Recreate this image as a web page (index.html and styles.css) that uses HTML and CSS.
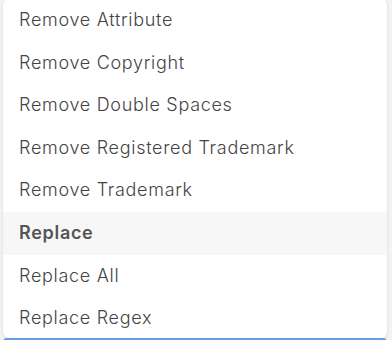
FILE: index.html
```html
<!DOCTYPE html>
<html>
<head>
<meta name="viewport" content="width=device-width, initial-scale=1">
<link rel="stylesheet" href="styles.css">
</head>
<body>

<div class="page">
  <ul class="menu">
    <li class="item">Remove Attribute</li>
    <li class="item">Remove Copyright</li>
    <li class="item">Remove Double Spaces</li>
    <li class="item">Remove Registered Trademark</li>
    <li class="item">Remove Trademark</li>
    <li class="item active">Replace</li>
    <li class="item">Replace All</li>
    <li class="item">Replace Regex</li>
  </ul>
  <div class="field"></div>
</div>

</body>
</html>
```

FILE: styles.css
```css
body {
  margin: 0;
  background-color: #f3f3f4;
  font-family: Inter, "Open Sans", Arial, sans-serif;
}

.page {
  padding: 0 5px 0 3px;
  height: 340px;
  overflow: hidden;
}

.menu {
  list-style: none;
  margin: -1px 0 0 0;
  padding: 0;
  height: 339px;
  background-color: #fff;
  border-radius: 6px;
  box-shadow: 0 1px 3px rgba(0, 0, 0, 0.12);
  overflow: hidden;
}

.item {
  height: 42.6px;
  line-height: 42.6px;
  padding-left: 16px;
  font-size: 18px;
  font-weight: 300;
  letter-spacing: 0.7px;
  color: #444;
}

.item.active {
  background-color: #f7f7f7;
  font-weight: 600;
  color: #555;
}

.field {
  height: 3px;
  border-top: 2px solid #6a9be0;
  border-radius: 4px 4px 0 0;
  background-color: #fff;
}
```
